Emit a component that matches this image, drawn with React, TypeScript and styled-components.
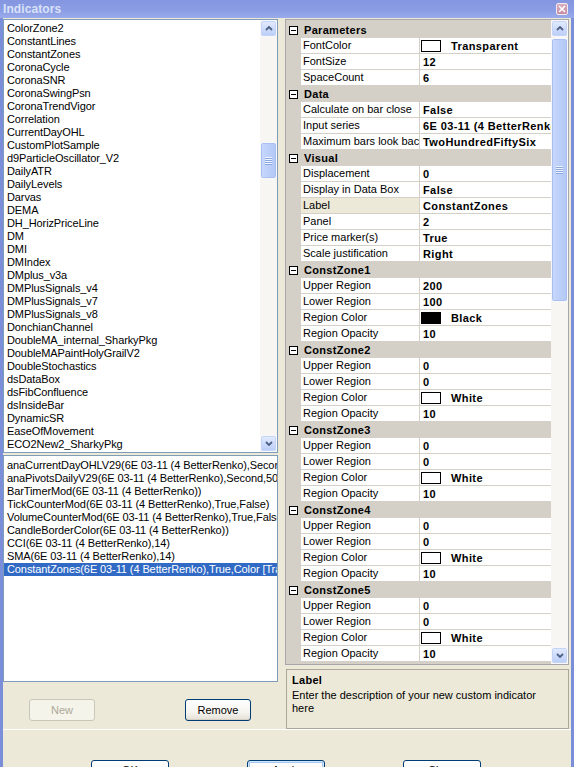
import React from "react";
import styled, { createGlobalStyle } from "styled-components";

const Global = createGlobalStyle`
  html, body { margin: 0; padding: 0; background: #ECE9D8; }
  body { font-family: "Liberation Sans", Arial, sans-serif; font-size: 11px; color: #000; }
  * { box-sizing: border-box; }
`;

const Window = styled.div`
  width: 574px;
  height: 767px;
  overflow: hidden;
  display: flex;
  flex-direction: column;
  background: #ECE9D8;
`;

const TitleBar = styled.div`
  height: 18px;
  flex: none;
  display: flex;
  align-items: center;
  justify-content: space-between;
  padding: 0 6px 0 3px;
  background: linear-gradient(180deg, #8496E0 0%, #8B9DE4 60%, #9AABEC 100%);
`;

const Title = styled.div`
  font-family: "Liberation Sans", Arial, sans-serif;
  font-weight: bold;
  font-size: 12px;
  color: #D9E2F8;
  letter-spacing: 0.1px;
`;

const CloseBtn = styled.div`
  width: 12px;
  height: 12px;
  border: 1px solid #F2E8EE;
  border-radius: 2px;
  background: linear-gradient(180deg, #D7AEC0 0%, #C48BA3 100%);
  display: flex;
  align-items: center;
  justify-content: center;
`;

const Frame = styled.div`
  flex: 1;
  display: flex;
  flex-direction: column;
  border-left: 3px solid #7B8ED9;
  border-right: 3px solid #7B8ED9;
  padding-top: 1px;
`;

const Main = styled.div`
  display: flex;
  gap: 7px;
  padding-right: 2px;
  height: 710px;
  flex: none;
`;

const LeftCol = styled.div`
  width: 275px;
  flex: none;
  display: flex;
  flex-direction: column;
`;

const ListBox = styled.div<{ $h: number; $top?: number }>`
  height: ${(p) => p.$h}px;
  margin-top: ${(p) => p.$top ?? 0}px;
  border: 1px solid #7F9DB9;
  background: #fff;
  display: flex;
  overflow: hidden;
`;

const ListItems = styled.div<{ $pt: number }>`
  flex: 1;
  min-width: 0;
  padding-top: ${(p) => p.$pt}px;
  overflow: hidden;
`;

const ListItem = styled.div<{ $selected?: boolean }>`
  height: 13px;
  line-height: 13px;
  padding-left: 3px;
  white-space: nowrap;
  overflow: hidden;
  letter-spacing: -0.1px;
  color: ${(p) => (p.$selected ? "#fff" : "#000")};
  background: ${(p) => (p.$selected ? "#316AC5" : "transparent")};
`;

const ScrollBar = styled.div`
  width: 17px;
  flex: none;
  display: flex;
  flex-direction: column;
  background: #F7F6F2;
`;

const ScrollBtn = styled.div`
  width: 17px;
  height: 17px;
  flex: none;
  border: 1px solid #F8F8FC;
  border-radius: 3px;
  background: linear-gradient(180deg, #E4ECFD 0%, #CCDAFB 55%, #BACDF7 100%);
  box-shadow: inset 0 0 0 1px #C4D4F6;
  display: flex;
  align-items: center;
  justify-content: center;
`;

const Track = styled.div`
  flex: 1;
  display: flex;
  flex-direction: column;
`;

const Thumb = styled.div<{ $top: number; $h: number }>`
  margin-top: ${(p) => p.$top}px;
  height: ${(p) => p.$h}px;
  border: 1px solid #F8F8FC;
  border-radius: 3px;
  background: linear-gradient(90deg, #C9D8FC 0%, #BCCFF9 50%, #B3C8F6 100%);
  box-shadow: inset 0 0 0 1px #A9BFF0;
  display: flex;
  align-items: center;
  justify-content: center;
`;

const Grip = styled.div`
  width: 7px;
  height: 8px;
  background: repeating-linear-gradient(180deg, #EEF4FE 0px, #EEF4FE 1px, #8CA6E4 1px, #8CA6E4 2px);
`;

const ActionRow = styled.div`
  display: flex;
  gap: 90px;
  padding-top: 17px;
  padding-left: 26px;
`;

const XPButton = styled.button<{ $w: number; $h: number; $focus?: boolean; $pb?: number }>`
  width: ${(p) => p.$w}px;
  height: ${(p) => p.$h}px;
  flex: none;
  padding: 0 0 ${(p) => p.$pb ?? 0}px;
  font-family: "Liberation Sans", Arial, sans-serif;
  font-size: 11px;
  color: #000;
  border: 1px solid #003C74;
  border-radius: 3px;
  background: linear-gradient(180deg, #FFFFFF 0%, #F6F5F0 60%, #E3E0D6 100%);
  box-shadow: ${(p) =>
    p.$focus ? "inset 0 0 0 1px #CEE7FF, inset 0 0 0 2px #A8C8F0" : "inset 0 -1px 0 #D6D0C5"};
  &:disabled {
    color: #ACA899;
    border-color: #C9C7BA;
    background: #F5F4EA;
    box-shadow: none;
  }
`;

const Separator = styled.div`
  height: 1px;
  flex: none;
  background: #FFFFFF;
`;

const BottomRow = styled.div`
  display: flex;
  gap: 78px;
  padding-top: 30px;
  padding-left: 88px;
`;

const RightCol = styled.div`
  width: 284px;
  flex: none;
  display: flex;
  flex-direction: column;
`;

const Grid = styled.div`
  height: 646px;
  flex: none;
  border: 1px solid #A7A6AA;
  display: flex;
  overflow: hidden;
`;

const GridRows = styled.div`
  flex: 1;
  min-width: 0;
  background: #D4D0C8;
  padding-top: 2px;
  overflow: hidden;
`;

const Row = styled.div`
  display: flex;
  height: 16px;
  flex: none;
`;

const Gutter = styled.div`
  width: 15px;
  flex: none;
  display: flex;
  align-items: center;
  justify-content: center;
`;

const MinusBox = styled.div`
  width: 9px;
  height: 9px;
  border: 1px solid #000;
  background: #fff;
  display: flex;
  align-items: center;
  justify-content: center;
  &::after {
    content: "";
    width: 5px;
    height: 1px;
    background: #000;
  }
`;

const CatLabel = styled.div`
  flex: 1;
  font-weight: bold;
  letter-spacing: 0.3px;
  line-height: 16px;
  padding-left: 3px;
  white-space: nowrap;
`;

const LabelCell = styled.div<{ $selected?: boolean }>`
  width: 119px;
  flex: none;
  line-height: 15px;
  padding-left: 2px;
  white-space: nowrap;
  overflow: hidden;
  background: ${(p) => (p.$selected ? "#ECE9D8" : "#fff")};
  border-right: 1px solid #D4D0C8;
  border-bottom: 1px solid #D4D0C8;
`;

const ValueCell = styled.div`
  flex: 1;
  min-width: 0;
  display: flex;
  align-items: center;
  padding-left: 3px;
  font-weight: bold;
  letter-spacing: 0.4px;
  white-space: nowrap;
  overflow: hidden;
  background: #fff;
  border-bottom: 1px solid #D4D0C8;
`;

const Swatch = styled.div<{ $color: string }>`
  width: 20px;
  height: 12px;
  flex: none;
  margin-left: -2px;
  margin-right: 10px;
  border: 1px solid #000;
  background: ${(p) => p.$color};
`;

const Desc = styled.div`
  margin-top: 4px;
  margin-left: 1px;
  height: 60px;
  flex: none;
  border: 1px solid #ACA899;
  padding: 3px 24px 0 5px;
`;

const DescTitle = styled.div`
  font-weight: bold;
  letter-spacing: 0.3px;
  line-height: 14px;
  margin-bottom: 2px;
`;

const DescText = styled.div`
  line-height: 13px;
`;

const Chevron = ({ down }: { down?: boolean }) => (
  <svg width="8" height="5" viewBox="0 0 8 5">
    <path
      d={down ? "M1 1 L4 4 L7 1" : "M1 4 L4 1 L7 4"}
      fill="none"
      stroke="#4D6185"
      strokeWidth="1.8"
    />
  </svg>
);

const CloseX = () => (
  <svg width="8" height="8" viewBox="0 0 8 8">
    <path d="M1 1 L7 7 M7 1 L1 7" stroke="#fff" strokeWidth="1.6" />
  </svg>
);

const indicators = [
  "ColorZone2", "ConstantLines", "ConstantZones", "CoronaCycle", "CoronaSNR",
  "CoronaSwingPsn", "CoronaTrendVigor", "Correlation", "CurrentDayOHL", "CustomPlotSample",
  "d9ParticleOscillator_V2", "DailyATR", "DailyLevels", "Darvas", "DEMA",
  "DH_HorizPriceLine", "DM", "DMI", "DMIndex", "DMplus_v3a",
  "DMPlusSignals_v4", "DMPlusSignals_v7", "DMPlusSignals_v8", "DonchianChannel",
  "DoubleMA_internal_SharkyPkg", "DoubleMAPaintHolyGrailV2", "DoubleStochastics", "dsDataBox",
  "dsFibConfluence", "dsInsideBar", "DynamicSR", "EaseOfMovement", "ECO2New2_SharkyPkg",
];

const applied = [
  "anaCurrentDayOHLV29(6E 03-11 (4 BetterRenko),Second,50,True)",
  "anaPivotsDailyV29(6E 03-11 (4 BetterRenko),Second,50,True)",
  "BarTimerMod(6E 03-11 (4 BetterRenko))",
  "TickCounterMod(6E 03-11 (4 BetterRenko),True,False)",
  "VolumeCounterMod(6E 03-11 (4 BetterRenko),True,False)",
  "CandleBorderColor(6E 03-11 (4 BetterRenko))",
  "CCI(6E 03-11 (4 BetterRenko),14)",
  "SMA(6E 03-11 (4 BetterRenko),14)",
  "ConstantZones(6E 03-11 (4 BetterRenko),True,Color [Transparent],12,6)",
];

type GridRow =
  | { cat: string }
  | { label: string; value: string; swatch?: string; selected?: boolean };

const zone = (n: number, up: string, low: string, color: string, name: string): GridRow[] => [
  { cat: `ConstZone${n}` },
  { label: "Upper Region", value: up },
  { label: "Lower Region", value: low },
  { label: "Region Color", value: name, swatch: color },
  { label: "Region Opacity", value: "10" },
];

const rows: GridRow[] = [
  { cat: "Parameters" },
  { label: "FontColor", value: "Transparent", swatch: "#fff" },
  { label: "FontSize", value: "12" },
  { label: "SpaceCount", value: "6" },
  { cat: "Data" },
  { label: "Calculate on bar close", value: "False" },
  { label: "Input series", value: "6E 03-11 (4 BetterRenko)" },
  { label: "Maximum bars look back", value: "TwoHundredFiftySix" },
  { cat: "Visual" },
  { label: "Displacement", value: "0" },
  { label: "Display in Data Box", value: "False" },
  { label: "Label", value: "ConstantZones", selected: true },
  { label: "Panel", value: "2" },
  { label: "Price marker(s)", value: "True" },
  { label: "Scale justification", value: "Right" },
  ...zone(1, "200", "100", "#000", "Black"),
  ...zone(2, "0", "0", "#fff", "White"),
  ...zone(3, "0", "0", "#fff", "White"),
  ...zone(4, "0", "0", "#fff", "White"),
  ...zone(5, "0", "0", "#fff", "White"),
  { cat: "ConstZone6" },
];

const VScroll = ({ thumbTop, thumbH }: { thumbTop: number; thumbH: number }) => (
  <ScrollBar>
    <ScrollBtn>
      <Chevron />
    </ScrollBtn>
    <Track>
      <Thumb $top={thumbTop} $h={thumbH}>
        <Grip />
      </Thumb>
    </Track>
    <ScrollBtn>
      <Chevron down />
    </ScrollBtn>
  </ScrollBar>
);

export default function App() {
  return (
    <>
      <Global />
      <Window>
        <TitleBar>
          <Title>Indicators</Title>
          <CloseBtn>
            <CloseX />
          </CloseBtn>
        </TitleBar>
        <Frame>
          <Main>
            <LeftCol>
              <ListBox $h={434}>
                <ListItems $pt={2}>
                  {indicators.map((n) => (
                    <ListItem key={n}>{n}</ListItem>
                  ))}
                </ListItems>
                <VScroll thumbTop={105} thumbH={37} />
              </ListBox>
              <ListBox $h={227} $top={2}>
                <ListItems $pt={3}>
                  {applied.map((n, i) => (
                    <ListItem key={n} $selected={i === applied.length - 1}>
                      {n}
                    </ListItem>
                  ))}
                </ListItems>
              </ListBox>
              <ActionRow>
                <XPButton $w={66} $h={22} disabled>
                  New
                </XPButton>
                <XPButton $w={66} $h={22}>
                  Remove
                </XPButton>
              </ActionRow>
            </LeftCol>
            <RightCol>
              <Grid>
                <GridRows>
                  {rows.map((r, i) =>
                    "cat" in r ? (
                      <Row key={i}>
                        <Gutter>
                          <MinusBox />
                        </Gutter>
                        <CatLabel>{r.cat}</CatLabel>
                      </Row>
                    ) : (
                      <Row key={i}>
                        <Gutter />
                        <LabelCell $selected={r.selected}>{r.label}</LabelCell>
                        <ValueCell>
                          {r.swatch && <Swatch $color={r.swatch} />}
                          {r.value}
                        </ValueCell>
                      </Row>
                    )
                  )}
                </GridRows>
                <VScroll thumbTop={1} thumbH={264} />
              </Grid>
              <Desc>
                <DescTitle>Label</DescTitle>
                <DescText>Enter the description of your new custom indicator here</DescText>
              </Desc>
            </RightCol>
          </Main>
          <Separator />
          <BottomRow>
            <XPButton $w={78} $h={23} $pb={4}>
              OK
            </XPButton>
            <XPButton $w={78} $h={23} $pb={4} $focus>
              Apply
            </XPButton>
            <XPButton $w={78} $h={23} $pb={4}>
              Close
            </XPButton>
          </BottomRow>
        </Frame>
      </Window>
    </>
  );
}
